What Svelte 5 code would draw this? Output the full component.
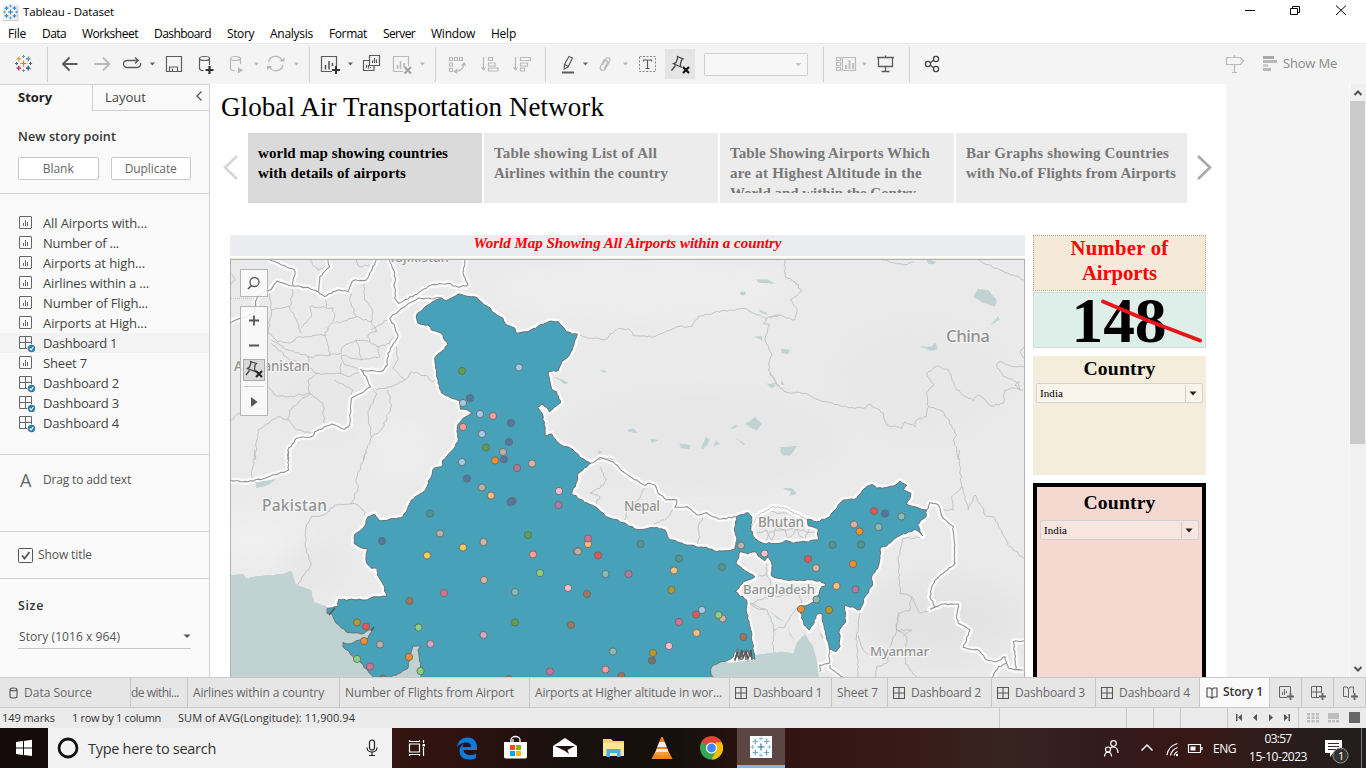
<script>
  // Spreads a label's letters so that it takes the given width.
  function fit(node, width) {
    const n = node.textContent.trim().length;
    const natural = node.getBoundingClientRect().width;
    node.style.letterSpacing = ((width - natural) / n).toFixed(3) + 'px';
  }

  let seed = 7;
  const rnd = () => ((seed = (seed * 16807) % 2147483647) / 2147483647) - 0.5;

  const parse = (text, ox = 0, oy = 0, k = 1) =>
    text.trim().split(/\s+/).map((p) => {
      const [x, y] = p.split(',').map(Number);
      return [ox + x / k, oy + y / k];
    });

  // Turns a coarse polyline into a coastline-like one.
  function rough(pts, amp = 1.6, close = false) {
    const all = close ? [...pts, pts[0]] : pts;
    let d = `M${all[0][0].toFixed(1)} ${all[0][1].toFixed(1)}`;
    for (let i = 1; i < all.length; i++) {
      const [x0, y0] = all[i - 1], [x1, y1] = all[i];
      const len = Math.hypot(x1 - x0, y1 - y0) || 1;
      const steps = Math.max(1, Math.round(len / 2.6));
      for (let s = 1; s <= steps; s++) {
        const t = s / steps;
        const o = s === steps ? 0 : rnd() * amp;
        d += `L${(x0 + (x1 - x0) * t - ((y1 - y0) / len) * o).toFixed(1)} ${(y0 + (y1 - y0) * t + ((x1 - x0) / len) * o).toFixed(1)}`;
      }
    }
    return d + (close ? 'Z' : '');
  }

  const india = rough(parse(`416.3,316 419.7,311.7 428,305 432,302 441.3,297.7 446.3,300.7 458,294 466,296 474.7,296.7 488,306.7 494.7,313.3 503,318.3 506.7,325 515,328.3 516.7,333.3 528,331.7 540,325 548.3,321.7 558.3,321.7 565,330 571.7,334 577.3,334 574,345 568.3,356.7 561.7,361.7 558.3,370.7 548.3,371.7 550,381.7 551.7,389.3 556.7,391.7 560.7,402.7 555,406.7 549.3,411.7 543.3,404 537.3,406.7 543.3,416.7 545,430 545,436 551.7,434 560,444 573.3,450 574,451.7 581.7,458.3 590.7,463.3 578.3,473.3 576.7,481.7 571.7,493.3 580,499.3 595,506.7 606.7,516.7 623.3,522.7 636.7,529.3 656.7,527.3 665,530 668.3,538.3 686.7,545 706.7,547.3 716.7,551.7 735,549.3 737,540 734.3,530 736.7,516.7 748.3,512.7 751.7,516.7 750.7,530 755,538.3 763.3,543.3 780,543.3 785,540.7 793.3,543.3 818.3,540 817.3,528.3 808.3,526 807.3,519.3 816.7,521.7 830,516.7 835,510 843.3,500 856.7,498.3 865,488.3 871.7,484.3 876.7,488.3 893.3,486 900,481 906.7,485 903.3,490 911,493.3 910,498.3 906,504 916.7,507.3 926.7,510 926,516.7 917.3,525 922.7,536 915,529.3 896.7,537.3 886.7,546 880.7,547.3 880,558.3 878.3,566.7 871.7,576.7 872.7,585 865,596.7 860,610 845,605 845,623.3 839.3,630 840,646.7 836,651.7 829.3,649.3 826.7,636.7 823.3,623.3 821.7,613.3 817.3,614 812.7,625 809.3,630 804,625 800.7,613.3 800,606.7 810,604 817.3,598.3 821.7,586.7 825.7,585 820,580.7 800,580 786.7,580 771.7,576 771.7,563.3 768.3,556.7 765,560.7 758,556 755,551.7 748,554 740,551.7 736,563.3 745,570.7 755,576.7 743.3,581.7 735,591.7 746.7,600 746.7,613.3 750,626.7 752.7,643.3 755,659.3 750,656 748,650 746,660 744,651 741,660 739,652 735,660.7 738,648.3 731.7,658.3 718.3,663.3 711.7,666.7 710.7,671.7 714,682 421.3,682 420.7,663.3 418,650 420.7,646 413,646 410.7,656.7 408,668.3 391,677 385,682 378,682 373,677 361.3,663.3 343,646.7 343,642.3 348,644 361.3,640 368,638.3 373.7,628.3 361.3,634 348,632.7 336.3,623.3 330.7,613.3 327,613.3 327.3,608.3 338,606.7 338.7,599.3 364.7,600 376.3,596.7 386.3,596.7 384.7,588.3 377.3,575 377.3,568.3 371.3,568.3 366.3,561.7 367.3,548.3 361.3,547.7 354,543.3 354.7,535 364.7,526 368,516.7 374.7,514.3 379.7,521 403,516.7 411.3,500 424.7,490.7 431.3,476.7 433,469.3 443,465 443,460 450.7,451.7 458,441.7 457.3,426.7 463,418.3 473,413.3 467.3,410 460.7,409.3 460.7,401.7 441.3,392.7 438,383.3 434.7,358.3 441.3,351.7 448,345 441.3,333.3 431.3,330 428,325 418,323.3`), 1.5, true);

  const tiles = { a: [228, 230], b: [500, 230], c: [770, 230], d: [228, 450], e: [500, 450], f: [730, 450] };
  const line = (amp) => ([t, p]) => rough(parse(p, ...tiles[t], 3), amp);
  const shape = ([t, p]) => rough(parse(p, ...tiles[t], 3), 0.8, true);

  const major = [
    ['a', '8,278 40,265 80,250 82,215 90,195 130,178 148,153 195,168 240,172 270,185 290,200 330,180 360,185 375,152 415,150 425,130 445,90'],
    ['a', '125,90 160,105 200,120 195,168'],
    ['a', '300,90 305,110 275,140 272,185'],
    ['a', '485,90 500,130 500,205 512,220 560,195 610,165 660,160 690,172 720,165 705,130 710,90'],
    ['a', '640,205 570,205 520,235 485,265 500,290 510,320 480,370 478,405 460,425 400,420 415,440 428,470 400,490 370,505 365,585 350,598 310,582 260,605 255,618 205,625 180,660 180,690'],
    ['d', '180,0 182,60 105,87 45,95 8,90'],
    ['e', '272,40 300,22 340,35 370,65 430,105 450,100 465,105 475,130 500,150 530,150 525,172 560,170 590,195 620,188 655,207 710,200'],
    ['f', '590,180 600,158 625,165 640,205 670,230 675,340 615,390 605,410 600,440 615,470 600,478 640,462 685,462 680,495 685,520 720,540 700,592 745,600 770,630 800,635 825,620 835,655 880,660'],
    ['f', '858,658 850,575 883,572'],
    ['f', '830,640 805,650 785,682'],
    ['f', '298,600 298,640 270,645 270,665'],
    ['f', '300,645 300,655 340,682']
  ].map(line(1.5));

  const mid = [
    ['f', '65,230 80,200 95,188 130,170 165,175 200,192 232,208'],
    ['b', '290,690 310,683 345,690'],
  ].map(line(1.5));

  const minor = [
    ['a', '125,190 130,240 150,235 185,230 195,170'],
    ['a', '130,240 120,310 150,335 185,340 215,320 295,315'],
    ['a', '185,230 205,270 220,310'],
    ['a', '220,295 250,260 245,230 315,235 320,260 290,315 300,345 305,375'],
    ['a', '290,200 295,230'],
    ['a', '375,155 365,210 385,260 430,275 435,245 410,210 410,160'],
    ['a', '320,280 385,260'],
    ['a', '430,275 445,305 420,315 425,335 450,350 485,340 500,320'],
    ['a', '430,300 485,265'],
    ['a', '305,375 340,370 345,350 385,330 425,335'],
    ['a', '385,330 400,390 340,375 350,405 400,420'],
    ['a', '400,390 455,380 450,350'],
    ['a', '305,375 240,380 245,415 270,430 335,430 340,400'],
    ['a', '335,430 360,440 405,425'],
    ['a', '130,340 175,380 210,400 245,415'],
    ['a', '130,330 180,360 240,380'],
    ['a', '270,430 240,450 245,490 285,520 290,580'],
    ['a', '320,450 375,480 370,505'],
    ['a', '245,490 180,500 140,495 122,470'],
    ['a', '245,490 185,540 180,565 205,600 260,610'],
    ['a', '8,570 60,530 122,540'],
    ['a', '80,690 90,600 150,560 180,570'],
    ['a', '430,470 445,490 420,550 430,620 405,690'],
    ['a', '445,480 500,465 530,450 550,425 600,440 615,455 630,430'],
    ['a', '505,350 510,390 495,415 510,430 530,450'],
    ['a', '480,480 490,530 460,600 430,620'],
    ['a', '8,130 22,148 8,165'],
    ['a', '245,90 270,120 290,110'],
    ['a', '385,90 395,110 425,105'],
    ['d', '80,0 72,85'],
    ['d', '413,0 405,35 385,85 390,115 368,165'],
    ['d', '205,408 250,345 232,290 235,225 250,200 290,195 320,165 370,160 395,170 420,205'],
    ['b', '235,318 315,328 355,295 390,300 400,318 465,320 530,290 575,290 595,260 665,242 730,235 800,265 840,255'],
    ['b', '800,265 790,280 810,285 795,330 815,370 805,420 835,470'],
    ['c', '20,90 45,90 45,140 75,155 95,185 60,210 80,235 75,270 20,255 0,265'],
    ['c', '0,430 30,475 55,488 105,490 150,512 230,530 280,535 300,522 340,550 350,585 395,595 405,575 435,590 440,570 470,560 475,530'],
    ['c', '475,530 468,490 492,465 470,432 500,408 535,420 560,480 610,512 625,495 665,528 700,520 705,480 735,475 760,480'],
    ['c', '475,530 520,545 560,615 550,630 568,690'],
    ['c', '335,90 400,105 430,95'],
    ['c', '625,90 690,120 730,135 765,150'],
    ['c', '765,410 730,410 690,395 680,405 700,440 740,455 750,480 735,465 750,455'],
    ['c', '765,345 750,365 765,385'],
    ['f', '687,0 695,110 715,180 735,135 770,200 790,200 840,290 885,330'],
    ['f', '695,110 665,140 670,180 640,180'],
    ['f', '575,262 520,265 505,320 510,430 545,440 570,490 610,480'],
    ['f', '545,440 540,480 505,490 500,540 530,560 525,640 560,682'],
    ['f', '505,490 500,540 480,590 470,640 440,650 435,682'],
    ['f', '500,540 545,540 520,560'],
    ['f', '390,480 380,560 385,682'],
    ['f', '385,555 400,600 415,615'],
    ['e', '300,50 320,90 300,115 270,130 300,140 285,165'],
    ['e', '435,110 420,145 380,185 372,218'],
    ['e', '525,170 500,205 450,230'],
    ['e', '612,195 595,230 600,260 590,290'],
    ['f', '90,235 100,200 120,185 150,190 180,190'],
    ['f', '80,250 110,240 125,270 140,230 165,240 175,265 200,240 220,270 240,235'],
    ['f', '105,275 120,245 190,235 260,250'],
    ['f', '112,320 108,370 120,390 120,440 60,460 110,480 130,530 130,610'],
    ['f', '110,375 75,380'],
    ['f', '130,540 165,530 180,500 215,460 205,430 120,440'],
    ['f', '60,460 80,475 105,480']
  ].map(line(2));

  const sea = [
    ['d', '8,375 45,372 55,385 85,378 165,372 190,362 205,405 250,420 258,455 297,470 330,500 440,540 600,580 600,692 8,692'],
    ['f', '-110,692 -110,600 0,640 75,628 75,615 110,610 150,605 190,610 200,580 215,560 225,552 250,590 262,640 268,692']
  ].map(shape);

  const lakes = [
    ['b', '768,148 800,148 825,160 775,158'], ['b', '720,185 738,185 736,195 722,195'], ['b', '778,238 800,248 803,254 780,246'],
    ['b', '762,320 785,318 788,332'], ['b', '300,418 320,422 312,430'], ['b', '165,442 185,448 205,458 192,463 180,450'],
    ['b', '382,600 400,595 415,610 385,605'], ['b', '450,628 475,630 455,638'], ['b', '538,640 572,645 568,658 542,655'],
    ['b', '602,655 618,620 630,630 610,658'], ['b', '640,650 648,632 660,642'], ['b', '690,595 712,584 705,596'],
    ['b', '736,582 765,562 785,582 768,602'], ['b', '705,622 738,642 730,645'], ['b', '797,460 830,465 815,476'], ['b', '293,660 308,665 296,672'],
    ['c', '470,90 498,93 492,103 475,101'], ['c', '610,200 622,178 655,180 680,210 675,230 640,218'], ['c', '660,285 685,257 690,270'],
    ['c', '450,350 485,350 495,338 503,358 482,362'], ['c', '32,358 60,358 55,372 35,370'], ['c', '30,652 80,648 72,662 40,678'],
    ['c', '0,462 15,460 8,475'], ['c', '0,152 14,160 0,163'], ['c', '34,448 44,465 32,462'],
    ['f', '150,0 195,0 178,18 155,12'], ['f', '158,115 185,115 200,130 178,138 182,124'], ['f', '118,483 165,515 140,505'],
    ['f', '168,510 178,545 195,572 182,560'], ['f', '268,540 280,560 276,570'], ['d', '82,97 145,87 125,103 85,115']
  ].map(shape);

  const C = { B: '#4e79a7', b: '#a0cbe8', O: '#f28e2b', o: '#ffbe7d', G: '#59a14f', g: '#8cd17d', Y: '#b6992d', y: '#f1ce63', T: '#499894', t: '#86bcb6', R: '#e15759', r: '#ff9d9a', D: '#79706e', a: '#bab0ac', P: '#d37295', p: '#fabfd2', V: '#b07aa1', v: '#d4a6c8', N: '#9d7660', n: '#d7b5a6' };
  const airports = `G462,371 B470,398 b463,403 b480,414 r493,416 r463,427 b482,434 G486,447.5 a503,452 b519,367.5 B511,423 B509,442 b462,462 B504,459.5 O495,460.5 B467,478.5 a482,487.5 o491,495.5 T430,513.5 a440,533.5 B382,541 y463,547.5 n483.5,542 y427,555.5 n484,580 P444,593 N409.5,601 Y357,622.5 R366,626.5 O364,641 a380,644.5 g418.5,627.5 v430.5,644 v483.5,635 O409,657 g357,659 P370,666.5 g420.5,671 N383,678.5 V517,468 n532,463.5 p559,491 V558.5,505 B512.5,501 B510.5,502 G528,535 o588,544 P588,538.5 n577,551 a578,551.5 R598,555.5 r533,554.5 T640.5,544 T679,558.5 T722,567 o674,570.5 g540,573 t605.5,574 V628.5,574 p568,588 t515,592 N587,594 Y671.5,590 R696,614.5 b702,610 n722.5,618.5 g718.5,615 G515,622.5 N571,625 P679,622 o696.5,633 N743.5,637 p669,646 t613,651.5 Y653,653 D652,660.5 r605.5,669.5 P550,671.5 N621.5,676 N509,679 a741,545.5 p764.5,553.5 R874,511 B885,513.5 t901.5,516.5 t878.5,527 n854,524.5 O859.5,531.5 T832.5,545 T861,544.5 R808,559 n816,568 O853,564 o836.5,586 V855.5,589.5 t816.5,599.5 O801,609 Y829,610`
    .split(/\s+/).map((s) => ({ c: C[s[0]], p: s.slice(1).split(',') }));

  // Icons are drawn in window coordinates; the box is x y width height.
  const svg = (box, body) => {
    const [, , w, h] = box.split(' ');
    return `<svg xmlns="http://www.w3.org/2000/svg" width="${w}" height="${h}" viewBox="${box}" fill="none" style="display:block">${body}</svg>`;
  };
  const plus = (x, y, r, c, w = 1.2) => `<path d="M${x - r} ${y}h${2 * r}M${x} ${y - r}v${2 * r}" stroke="${c}" stroke-width="${w}"/>`;
  const burst = (x, y, s, c) =>
    plus(x, y, 3 * s, c[0]) + plus(x - 4.7 * s, y - 4.6 * s, 2.3 * s, c[1]) + plus(x + 4.7 * s, y - 4.6 * s, 2.3 * s, c[2]) +
    plus(x - 4.7 * s, y + 4.6 * s, 2.3 * s, c[3]) + plus(x + 4.7 * s, y + 4.6 * s, 2.3 * s, c[4]) +
    plus(x, y - 7 * s, 1.6 * s, c[5], 1) + plus(x, y + 7 * s, 1.6 * s, c[5], 1) + plus(x - 7 * s, y, 1.6 * s, c[6], 1) + plus(x + 7 * s, y, 1.6 * s, c[6], 1);
  const dk = '#5c5c5c', lt = '#b9b9b9';
  const caret = (x, c = '#666') => [x - 4, 8, svg(`${x - 4} 60 8 8`, `<path d="M${x - 2.2} 62.5h5.2l-2.600 3z" fill="${c}"/>`)];
  const ic = (x, w, b) => [x, w, svg(`${x} 52 ${w} 24`, b)];
  const sep = (x) => [x, 1, `<i style="display:block;width:1px;height:35px;background:#cfcfcf"></i>`];

  const tools = [
    ic(14, 20, burst(23.5, 63.5, 1, ['#e8762c', '#eb912c', '#5b879b', '#c72037', '#1f447e', '#7199a6', '#5c6692'])),
    sep(47),
    ic(60, 20, `<path d="M77.500 64H63.500M69.500 57.500L63 64l6.500 6.500" stroke="${dk}" stroke-width="1.9"/>`),
    ic(92, 20, `<path d="M94.500 64h14M103 57.500l6.500 6.500-6.500 6.500" stroke="${lt}" stroke-width="1.9"/>`),
    ic(122, 20, `<path d="M138 60.500H127a3.500 3.500 0 0 0 0 7h10.500a3.500 3.500 0 0 0 3-4.500M135 57.500l3.200 3-3.200 3" stroke="${dk}" stroke-width="1.400"/>`),
    caret(152),
    ic(164, 20, `<path d="M166.500 56.500h15v15h-15zM169.500 71.500v-4.500h8v4.500M172.500 71v-2.500" stroke="${dk}" stroke-width="1.200"/>`),
    ic(196, 20, `<path d="M199.500 58v10.500c0 1.200 1.500 2 4 2.200M209.500 58v7M199.500 58.500a5 2 0 0 1 10 0a5 2 0 0 1-10 0" stroke="${dk}" stroke-width="1.200"/><path d="M209.500 66v8m-4-4h8" stroke="#333" stroke-width="2.200"/>`),
    ic(226, 20, `<path d="M230.500 58v10.500c0 1.200 1.500 2 4 2.200M240.500 58v6M230.500 58.500a5 2 0 0 1 10 0a5 2 0 0 1-10 0" stroke="${lt}" stroke-width="1.200"/><path d="M238 67l5 3.300-5 3.200z" fill="${lt}"/>`),
    caret(256, lt),
    ic(266, 20, `<path d="M268.500 62a7.200 7.200 0 0 1 13.500-1.500M283 65a7.200 7.200 0 0 1-13.500 1.800" stroke="${lt}" stroke-width="1.300"/><path d="M279 61.500h5.500v-4zM272.500 66H267v4z" fill="${lt}"/>`),
    caret(296, lt),
    sep(309),
    ic(320, 20, `<path d="M332 71.500h-10.500v-15h15V66" stroke="${dk}" stroke-width="1.200"/><path d="M325.500 65v4.500M329 61v8.500M332.500 63v3" stroke="${dk}" stroke-width="1.600"/><path d="M336 66v8m-4-4h8" stroke="#333" stroke-width="2"/>`),
    caret(350),
    ic(362, 20, `<path d="M369.500 55.500h10v10h-10zM369 60.500h-5.500v10h10.500V66M372.500 63v-2.500M374.500 63v-5M376.500 63v-3.500M366.500 68v-3M368.500 68.500v-3.500M370.500 68v-1" stroke="${dk}" stroke-width="1.200"/>`),
    ic(392, 20, `<path d="M403 71.500h-9.500v-15h15V66" stroke="${lt}" stroke-width="1.200"/><path d="M397.500 65v4M400.500 61v8M404 63v4" stroke="${lt}" stroke-width="1.600"/><path d="M404.500 67l6.500 6.500m0-6.500l-6.500 6.500" stroke="#a5a5a5" stroke-width="2.200"/>`),
    caret(422, lt),
    sep(435),
    ic(447, 20, `<path d="M449.500 57.500h3v3h-3zM454.500 57.500h3v3h-3zM459.500 57.500h3v3h-3zM449.500 63h3v3h-3zM449.500 68.500h3v3h-3zM464 64c0 4-3.500 7.500-9 7.500M461.500 66l2.500-3 2 3M457.500 69l-3 2.500 3 2" stroke="${lt}" stroke-width="1.200"/>`),
    ic(480, 20, `<path d="M483.500 57v13M481.500 67l2 3 2-3M488.500 57.500h4v3h-4zM488.500 63h6.500v3h-6.500zM488.500 68h9.500v3h-9.500z" stroke="${lt}" stroke-width="1.200"/>`),
    ic(512, 20, `<path d="M515.500 57v13M513.500 67l2 3 2-3M520.500 57.500h10v3h-10zM520.500 63h7v3h-7zM520.500 68h4v3h-4z" stroke="${lt}" stroke-width="1.200"/>`),
    sep(545),
    ic(557, 20, `<path d="M569 56.500l3.500 1.500-4.500 9-3.800 2 .3-4.500z M565 64.500l3 2" stroke="${dk}" stroke-width="1.200"/><path d="M562 72.500h12" stroke="${dk}" stroke-width="2"/>`),
    caret(585),
    ic(595, 20, `<path d="M602.500 65l3.300-6.200c1.500-2.500 5.300-.8 4 2l-4.500 8.200c-1.800 3-6.200.8-4.800-2.200l4-7.500M604 69l3.500-6.500c.8-1.600-1-2.500-2-1" stroke="${lt}" stroke-width="1.200"/>`),
    caret(625, lt),
    ic(637, 20, `<path d="M639.500 56.500h16v15h-16z" stroke="#888" stroke-dasharray="2 1.500"/><path d="M643.500 61.500v-1.500h8v1.500M647.500 60v8.500M645.500 68.500h4" stroke="${dk}" stroke-width="1.200"/>`),
    [665, 30, `<span style="display:block;background:#e5e5e5;padding:3px 0">` + svg('665 52 30 24', `<path d="M677.500 56.500l5.500 2.500-1.500 1.200-1.200 4 .7 2.800-7.500-3.200 2.500-1.300 1.500-4zM675.500 65.500l-4 5" stroke="#444" stroke-width="1.300"/><path d="M683 67l6 6m0-6l-6 6" stroke="#111" stroke-width="2.200"/>`) + `</span>`],
    [704, 104, svg('704 51 104 24', `<rect x="704.500" y="52.500" width="103" height="22" rx="1" fill="#f7f7f7" stroke="#cfcfcf"/><path d="M795.500 62h6l-3 3.500z" fill="#c8c8c8"/>`)],
    sep(823),
    ic(834, 24, `<path d="M836.500 57.500h4v3h-4zM836.500 62.500h4v3h-4zM836.500 67.500h4v3h-4zM842.500 57.500h13v13h-13z" stroke="${lt}" stroke-width="1.200"/><path d="M846 65v4M849.500 60v9M853 63v6" stroke="${lt}" stroke-width="1.800"/>`),
    caret(863.5, lt),
    ic(875, 20, `<path d="M877 57.500h17M878.500 58v8.500h14V58M885.500 67v4M881.500 71.500h8M885.500 57v-1.500" stroke="${dk}" stroke-width="1.300"/>`),
    sep(909),
    ic(922, 20, `<circle cx="928" cy="64" r="2.600" stroke="#444" stroke-width="1.300"/><circle cx="936" cy="59" r="2.600" stroke="#444" stroke-width="1.300"/><circle cx="936" cy="69" r="2.600" stroke="#444" stroke-width="1.300"/><path d="M930.500 62.500l3-2M930.500 65.500l3 2" stroke="#444" stroke-width="1.300"/>`),
    ic(1225, 20, `<path d="M1226.500 57.500h14l3 3.500-3 3.500h-14zM1234.500 55v2.500M1234.500 65v7.500M1232 72.500h5" stroke="${lt}" stroke-width="1.200"/>`),
    ic(1262, 16, `<path d="M1263 56h11v3h-11z" fill="#aaa"/><path d="M1263 60h14v3h-14z" fill="#b9b9b9"/><path d="M1263 64h5v3h-5z" fill="#ccc"/><path d="M1263 68h8v3h-8z" fill="#b9b9b9"/>`)
  ];
  const placed = tools.map(([x, w, html], i) => ({ gap: x - (i ? tools[i - 1][0] + tools[i - 1][1] : 0), w, html }));

  const sheetIcon = svg('0 0 16 16', `<rect x="1.500" y=".5" width="12" height="12" rx=".5" stroke="#666"/><path d="M5.500 10V7M7.500 10V4M9.500 10V6" stroke="#666"/>`);
  const dashIcon = svg('0 0 18 17', `<path d="M1.500 .5h12v12h-12zM7.500 .5v12M1.500 6.500h12" stroke="#666"/><circle cx="13.500" cy="12.500" r="4.300" fill="#fafafa"/><circle cx="13.500" cy="12.500" r="3.700" fill="#2f7ea6"/><path d="M11.700 12.500l1.400 1.400 2.300-2.700" stroke="#fff" stroke-width="1.100"/>`);
  const grid = svg('0 0 12 12', `<path d="M.5 .5h11v11H.5zM6 .5v11M.5 6h11" stroke="#555" stroke-width="1.100"/>`);
  const book = (c) => svg('0 0 12 14', `<path d="M6 3.500L4.500 2 1 2v9h3.500L6 12.500 7.500 11H11V2H7.500zM6 3.500v9" stroke="${c}" stroke-width="1.200"/>`);
  const addIcons = [
    svg('0 0 20 18', `<path d="M11 13.500H3.500v-11h11V9M6.500 11V8M8.500 11V5M10.500 9V7" stroke="#666"/><path d="M14.500 9v7M11 12.500h7" stroke="#666" stroke-width="1.800"/>`),
    svg('0 0 20 18', `<path d="M11 13.500H3.500v-11h10V9M8.500 2.500v11M3.500 8h10" stroke="#666"/><path d="M14.500 9v7M11 12.500h7" stroke="#666" stroke-width="1.800"/>`),
    svg('0 0 20 18', `<path d="M8.500 5L7 3H3.500v9.500H7l1.500 1.500M8.500 5L10 3h3.500v6M8.500 5v9" stroke="#666"/><path d="M14.500 9v7M11 12.500h7" stroke="#666" stroke-width="1.800"/>`)
  ];

  const menus = [['File', 8, 18], ['Data', 42, 24], ['Worksheet', 82, 56], ['Dashboard', 154, 57], ['Story', 227, 27], ['Analysis', 270, 43], ['Format', 329, 38], ['Server', 383, 32], ['Window', 431, 44], ['Help', 491, 25]]
    .map((m, i, a) => ({ t: m[0], w: m[2], gap: m[1] - (i ? a[i - 1][1] + a[i - 1][2] : 0) }));

  const sheets = [['All Airports with...', 104], ['Number of ...', 76], ['Airports at high...', 102], ['Airlines within a ...', 106], ['Number of Fligh...', 105], ['Airports at High...', 104], ['Dashboard 1', 74], ['Sheet 7', 44], ['Dashboard 2', 76], ['Dashboard 3', 76], ['Dashboard 4', 76]];

  const cards = [
    [['world map showing countries', 190], ['with details of airports', 148]],
    [['Table showing List of All', 163], ['Airlines within the country', 174]],
    [['Table Showing Airports Which', 200], ['are at Highest Altitude in the', 192], ['World and within the Contry', 186]],
    [['Bar Graphs showing Countries', 203], ['with No.of Flights from Airports', 210]]
  ];

  const pages = [
    ['', 'Airlines within a country', 131, 152], ['', 'Number of Flights from Airport', 169, 190], ['', 'Airports at Higher altitude in wor...', 187, 200],
    ['g', 'Dashboard 1', 69, 102], ['', 'Sheet 7', 41, 56], ['g', 'Dashboard 2', 70, 104], ['g', 'Dashboard 3', 70, 104], ['g', 'Dashboard 4', 71, 104]
  ];

  const T = (x, w, b) => ({ x, w, html: svg(`${x} 732 ${w} 32`, b) });
  const apps = [
    T(404, 24, `<path d="M409.500 744v8h10v-8zM409.500 740v1.500h10V740M409.500 756v-1.500h10v1.500" stroke="#fff" stroke-width="1.200"/><path d="M423.500 740v3M423.500 747v9" stroke="#fff" stroke-width="1.200"/><path d="M422.500 744h2.500v2.500h-2.500z" fill="#fff"/>`),
    T(455, 24, `<path d="M457 747c1-6 5-9.500 10.500-9.500 6 0 9.500 4 9.500 10v2.500h-13.500c.3 3.500 3 5 6.500 5 2.500 0 4.500-.7 6-1.600v4.500c-1.800 1-4.200 1.600-7 1.600-6 0-9.500-3.500-9.500-8.500 0-3.500 1.800-6 4.500-7.500-1 1.300-1.300 2.500-1.400 3.500h8.400c0-2.600-1.500-4.400-4.500-4.400-4 0-7.500 2-9.500 4.400z" fill="#0c7bdc"/>`),
    T(503, 24, `<path d="M511 742v-2a4.500 3.500 0 0 1 9 0v2M513 742v-3" stroke="#fff" stroke-width="1.300"/><path d="M504 742h23v15.500l-1.500 1h-20l-1.500-1z" fill="#fff"/><path d="M510 745h5v5h-5z" fill="#f25022"/><path d="M516 745h5v5h-5z" fill="#7fba00"/><path d="M510 751h5v5h-5z" fill="#00a4ef"/><path d="M516 751h5v5h-5z" fill="#ffb900"/>`),
    T(553, 24, `<path d="M553 746l12-8 12 8v11h-24z" fill="#fff"/><path d="M555 746h20l-7.500 4 1.500 4-4-3z" fill="#22100e"/>`),
    T(602, 24, `<path d="M603 739h8l2 2h11v15h-21z" fill="#f7d36b"/><path d="M603 743h21v13h-21z" fill="#ffe694"/><path d="M606.500 757v-8h14v8h-3.500v-4h-7v4z" fill="#3fb4e6"/>`),
    T(651, 24, `<path d="M661.200 737h1.600l6.700 17h-15z" fill="#f57f17"/><path d="M659.300 742h5.400l2 5h-9.400z" fill="#eee"/><path d="M656.700 749h10.600l1.700 4.500h-14z" fill="#f4e9df"/><path d="M654.500 753h15l3 6h-21z" fill="#f08a1d"/><path d="M655 754c3 2 11 2 14 0l-1-2h-12z" fill="#ff9a2e"/>`),
    T(699, 24, `<circle cx="711.500" cy="748" r="11.500" fill="#34a853"/><path d="M701.500 742.200a11.500 11.500 0 0 1 20 0L711.500 748z" fill="#ea4335"/><path d="M701.500 742.200a11.500 11.500 0 0 1 20-.2h-10z" fill="#ea4335"/><path d="M721.500 742.200a11.500 11.500 0 0 1-10 17.300l5-9-1-8.300z" fill="#fbbc05"/><circle cx="711.500" cy="748" r="5.600" fill="#fff"/><circle cx="711.500" cy="748" r="4.400" fill="#4285f4"/>`)
  ].map((a, i, l) => ({ ...a, gap: a.x - (i ? l[i - 1].x + 24 : 392) }));

  const blue = ['#2b7bb5', '#3a85bb', '#3a85bb', '#3a85bb', '#3a85bb', '#5c9ec9', '#5c9ec9'];
  const pale = ['#2b7bb5', '#6fa9d0', '#6fa9d0', '#6fa9d0', '#6fa9d0', '#8fbbd9', '#8fbbd9'];
  const appLogo = svg('0 0 18 18', `<path d="M1 1h15v17H1z" fill="#f0f3f5"/><path d="M16 2v15.500H1" stroke="#c8c8c8"/>` + burst(8.5, 9, 0.85, blue));
  const bigLogo = svg('0 0 24 24', `<path d="M1 1h22v22H1z" fill="#fff"/>` + burst(12, 12, 1.2, pale));
</script>

{#snippet combo(tint)}
  <div class="combo" class:tint>
    <span use:fit={23}>India</span>
    <svg width="17" height="17" viewBox="0 0 17 17"><path d="M.5 0v17" stroke="#ccc" /><path d="M4.500 6.500h7l-3.500 4z" fill="#222" /></svg>
  </div>
{/snippet}

<div class="window">
  <header class="titlebar">
    {@html appLogo}
    <span class="name" use:fit={91}>Tableau - Dataset</span>
    <svg class="winbtns" width="120" height="20" viewBox="1240 0 120 20" fill="none" stroke="#000">
      <path d="M1245 10.500h10M1290.500 8.500h7v6h-7zM1292.500 8V6.500h7v6H1298" /><path d="M1336 5.500l10 9.500M1346 5.500l-10 9.500" />
    </svg>
  </header>
  <nav class="menubar">
    {#each menus as m}<span style:margin-left="{m.gap}px" style:width="{m.w}px"><b use:fit={m.w}>{m.t}</b></span>{/each}
  </nav>
  <div class="toolbar">
    {#each placed as p}<span style:margin-left="{p.gap}px" style:width="{p.w}px">{@html p.html}</span>{/each}
    <span class="showme"><b use:fit={54}>Show Me</b></span>
  </div>

  <main>
    <aside>
      <div class="tabs">
        <div class="on"><b use:fit={34}>Story</b></div>
        <div class="off"><span use:fit={41}>Layout</span><svg width="8" height="12" viewBox="0 0 8 12" fill="none" stroke="#555" stroke-width="1.300"><path d="M6.500 .5L2 5l4.500 4.500" /></svg></div>
      </div>
      <section class="new">
        <h4><span use:fit={98}>New story point</span></h4>
        <div class="btns"><button><span use:fit={31}>Blank</span></button><button><span use:fit={52}>Duplicate</span></button></div>
      </section>
      <ul>
        {#each sheets as s, i}
          <li class:sel={i === 6}><i>{@html s[0].startsWith('Dash') ? dashIcon : sheetIcon}</i><span use:fit={s[1]}>{s[0]}</span></li>
        {/each}
      </ul>
      <section class="drag"><i>A</i><span use:fit={88}>Drag to add text</span></section>
      <section class="check">
        <svg width="15" height="15" viewBox="0 0 15 15" fill="none"><rect x=".5" y=".5" width="14" height="14" rx="1" stroke="#555" /><path d="M4 7.500l2.500 3 5-6.500" stroke="#555" stroke-width="1.800" /></svg>
        <span use:fit={54}>Show title</span>
      </section>
      <section class="size">
        <h4><span use:fit={26}>Size</span></h4>
        <div class="pick"><span use:fit={101}>Story (1016 x 964)</span><svg width="8" height="5" viewBox="0 0 8 5"><path d="M.5 .5h7L4 4z" fill="#555" /></svg></div>
      </section>
    </aside>

    <div class="story">
      <h1><span use:fit={383}>Global Air Transportation Network</span></h1>
      <div class="points">
        <svg width="38" height="70" viewBox="210 133 38 70" fill="none" stroke="#d5d5d5" stroke-width="2.500"><path d="M237 156l-12 11.500 12 11.500" /></svg>
        <div class="cards">
          {#each cards as c, i}
            <div class="card" class:active={i === 0}><div>{#each c as l}<p><span use:fit={l[1]}>{l[0]}</span></p>{/each}</div></div>
          {/each}
        </div>
        <svg width="39" height="70" viewBox="1187 133 39 70" fill="none" stroke="#aaa" stroke-width="2.700"><path d="M1198 156l12 11.500-12 11.500" /></svg>
      </div>
      <div class="board">
        <div class="left">
          <div class="maptitle"><span use:fit={308}>World Map Showing All Airports within a country</span></div>
          <div class="map">
            <svg class="geo" width="793" height="418" viewBox="231 260 793 418">
              <defs>
                <filter id="soft" x="-50%" y="-50%" width="200%" height="200%"><feGaussianBlur stdDeviation="14" /></filter>
              </defs>
              <rect x="231" y="260" width="793" height="418" fill="#eaeaea" />
              <g filter="url(#soft)">
                <ellipse cx="640" cy="290" rx="150" ry="25" fill="#eeeeee" /><ellipse cx="260" cy="540" rx="50" ry="30" fill="#f0f0f0" />
                <ellipse cx="700" cy="440" rx="140" ry="45" fill="#e7e7e7" /><ellipse cx="310" cy="565" rx="30" ry="20" fill="#e6e6e6" />
                <ellipse cx="920" cy="380" rx="90" ry="60" fill="#e8e8e8" /><ellipse cx="940" cy="620" rx="80" ry="40" fill="#e3e3e3" />
                <ellipse cx="330" cy="400" rx="60" ry="40" fill="#e8e8e8" /><ellipse cx="400" cy="450" rx="30" ry="30" fill="#eeeeee" />
              </g>
              <g fill="none" stroke="#b9b9b9" stroke-width=".8">{#each minor as d}<path {d} />{/each}</g>
              <path d="M231 298.500h28" stroke="#c6c6c6" stroke-dasharray="1 1" />
              <g fill="none" stroke="#fafafa" stroke-width="6" stroke-linejoin="round">
                {#each major as d}<path {d} />{/each}{#each mid as d}<path {d} />{/each}<path d={india} />
              </g>
              <g fill="#c1d2d2">{#each sea as d}<path {d} />{/each}{#each lakes as d}<path {d} />{/each}</g>
              <g fill="none" stroke="#959595" stroke-width="1.100">{#each major as d}<path {d} />{/each}</g>
              <g fill="none" stroke="#b4b4b4" stroke-width=".8">{#each mid as d}<path {d} />{/each}</g>
              <path d={india} fill="#47a1b9" stroke="#6b6f72" />
              <path d="M735 660l2-8 2 7 3-9 1 8 3-7 2 8 3-9 1 10M329 615l6-7M371 631l3-4" fill="none" stroke="#555" stroke-width="1.400" />
              <g class="lbl">
                <text x="234" y="371" font-size="13.500" textLength="76">Afghanistan</text>
                <text x="262" y="511" font-size="15.500" textLength="65">Pakistan</text>
                <text x="946" y="342" font-size="17" textLength="44">China</text>
                <text x="624" y="511" font-size="13.500" textLength="36">Nepal</text>
                <text x="758" y="527" font-size="13.500" textLength="46">Bhutan</text>
                <text x="743" y="594" font-size="13.300" textLength="72">Bangladesh</text>
                <text x="870" y="656" font-size="13.300" textLength="59">Myanmar</text>
                <text x="389" y="261.500" font-size="13" textLength="60">Tajikistan</text>
              </g>
              <g stroke="#6c6660" stroke-opacity=".85">
                {#each airports as a}<circle cx={a.p[0]} cy={a.p[1]} r="3.600" fill={a.c} />{/each}
              </g>
            </svg>
            <div class="controls">
              <svg width="28" height="28" viewBox="240 269 28 28" fill="none"><rect x="240.500" y="269.500" width="27" height="27" fill="#fafafa" fill-opacity=".85" stroke="#b5b5b5" /><circle cx="254.500" cy="282" r="4.500" stroke="#555" stroke-width="1.300" /><path d="M251.500 285.500l-3.500 3.500" stroke="#555" stroke-width="1.600" /></svg>
              <svg width="28" height="110" viewBox="240 306 28 110" fill="none">
                <rect x="240.500" y="306.500" width="27" height="109" fill="#fafafa" fill-opacity=".85" stroke="#b5b5b5" />
                <path d="M249 320.500h10M254 315.500v10M249 345.500h10" stroke="#555" stroke-width="1.800" />
                <rect x="243.500" y="359.500" width="21" height="21" fill="#d9d9d9" stroke="#aaa" />
                <path d="M250.500 361.500l6 2-1.500 1.500-.5 4 1 2.500-8-3 2-1.500 1.300-3.500zM249.500 370.500l-3.500 4.500" stroke="#444" stroke-width="1.300" /><path d="M256 371l6 6m0-6l-6 6" stroke="#222" stroke-width="2" />
                <path d="M244 386.500h20" stroke="#ccc" /><path d="M251 397l6.500 5-6.500 5z" fill="#555" />
              </svg>
            </div>
          </div>
        </div>
        <div class="right">
          <div class="numtitle"><p><span use:fit={98}>Number of</span></p><p><span use:fit={75}>Airports</span></p></div>
          <div class="num"><span use:fit={95}>148</span>
            <svg width="173" height="56" viewBox="1033 292 173 56"><path d="M1103 301.500L1149 321l51 19.500" fill="none" stroke="#e8151b" stroke-width="4" stroke-linecap="round" /></svg>
          </div>
          <div class="country"><h3><span use:fit={72}>Country</span></h3>{@render combo(false)}</div>
          <div class="country pink"><h3><span use:fit={72}>Country</span></h3>{@render combo(true)}</div>
        </div>
      </div>
    </div>
    <div class="gutter"></div>
    <div class="scroll">
      <svg width="16" height="17" viewBox="0 0 16 17" fill="none" stroke="#505050" stroke-width="2"><path d="M4.500 11L8 7.500l3.500 3.500" /></svg>
      <div class="thumb"></div>
      <svg class="down" width="16" height="17" viewBox="0 0 16 17" fill="none" stroke="#505050" stroke-width="2"><path d="M4.500 7L8 10.500 11.500 7" /></svg>
    </div>
  </main>

  <div class="pages">
    <div class="src"><svg width="9" height="12" viewBox="0 0 9 12" fill="none" stroke="#555" stroke-width="1.100"><path d="M1 2.500v7c0 2 7 2 7 0v-7c0-2-7-2-7 0c0 1.600 7 1.600 7 0" /></svg><span use:fit={68}>Data Source</span></div>
    <div class="cut"><span use:fit={48}>de withi...</span></div>
    {#each pages as p}
      <div style:width="{p[3]}px">{#if p[0]}<i>{@html grid}</i>{/if}<span use:fit={p[2]}>{p[1]}</span></div>
    {/each}
    <div class="cur"><i>{@html book('#555')}</i><b use:fit={40}>Story 1</b></div>
    {#each addIcons as a}<div class="add">{@html a}</div>{/each}
  </div>

  <div class="status">
    <span use:fit={53}>149 marks</span><span use:fit={89}>1 row by 1 column</span><span use:fit={177}>SUM of AVG(Longitude): 11,900.94</span>
    <svg width="367" height="20" viewBox="999 708 367 20">
      <path d="M999.500 708v20M1126.500 708v20M1153.500 708v20M1180.500 708v20M1227.500 708v20M1298.500 708v20" stroke="#c9c9c9" />
      <path d="M1236 714h1.500v7h-1.500zM1242 714v7l-4-3.500zM1257 714v7l-4-3.500zM1269 714v7l4-3.500zM1284 714v7l4-3.500zM1288.500 714h1.500v7h-1.500z" fill="#555" />
      <path d="M1307 713h3v2.500h-3zM1311.500 713h3v2.500h-3zM1316 713h3v2.500h-3zM1307 716.500h3v2.500h-3zM1311.500 716.500h3v2.500h-3zM1316 716.500h3v2.500h-3zM1307 720h3v2.500h-3zM1311.500 720h3v2.500h-3zM1316 720h3v2.500h-3zM1328 713h11v6h-11zM1328 720h3v2.500h-3zM1332 720h3v2.500h-3zM1336 720h3v2.500h-3z" fill="#bdbdbd" />
      <path d="M1349 712h11v11h-11z" fill="#666" />
    </svg>
  </div>

  <footer>
    <svg width="48" height="40" viewBox="0 728 48 40" fill="#fff"><path d="M16 742l7-1v6.500h-7zM24 740.900l8-1.100v7.700h-8zM16 748.500h7v6.500l-7-1zM24 748.500h8v7.500l-8-1.100z" /></svg>
    <div class="search">
      <svg width="24" height="24" viewBox="0 0 24 24"><circle cx="12" cy="12" r="9" fill="none" stroke="#111" stroke-width="2.800" /></svg>
      <span use:fit={128}>Type here to search</span>
      <svg width="14" height="18" viewBox="0 0 14 18" fill="none" stroke="#222" stroke-width="1.200"><rect x="4.500" y="1" width="5" height="10" rx="2.500" /><path d="M2 8.500c0 6 10 6 10 0M7 13v3.500M4 16.500h6" /></svg>
    </div>
    {#each apps as a}<span class="app" style:margin-left="{a.gap}px">{@html a.html}</span>{/each}
    <div class="running">{@html bigLogo}</div>
    <svg class="tray" width="110" height="40" viewBox="1098 728 110 40" fill="none" stroke="#fff" stroke-width="1.200">
      <circle cx="1113.500" cy="743.500" r="2.800" /><path d="M1110.500 748c1.500-1.500 5-1.500 6.500 1 .8 1.400 1 2.500 1 4" /><circle cx="1108" cy="749.500" r="2.500" /><path d="M1104.500 756.500c.3-3 1.500-4.300 3.500-4.300s3.300 1.300 3.600 4.300" />
      <path d="M1141.500 750.500l5.500-5.500 5.500 5.500" stroke-width="1.500" />
      <path d="M1167 755c1-6 4.500-10 10.500-11.500M1170.500 755.500c.8-4 3-6.500 7-8M1174 755.500c.5-2 1.500-3.200 3.500-4" /><circle cx="1177" cy="755" r="1.200" fill="#fff" stroke="none" />
      <path d="M1188.500 744.500h12v8h-12zM1202 747v3" /><path d="M1190.500 746.500h5v4h-5z" fill="#fff" stroke="none" />
    </svg>
    <span class="eng"><b use:fit={23}>ENG</b></span>
    <div class="clock"><span use:fit={27}>03:57</span><span use:fit={58}>15-10-2023</span></div>
    <svg class="note" width="44" height="40" viewBox="1322 728 44 40"><path d="M1325 740h17v13h-9l-3 4v-4h-5z" fill="#fff" /><path d="M1328 743.500h11M1328 746.500h11M1328 749.500h8" stroke="#3b2624" /><circle cx="1340.500" cy="755.500" r="7.500" fill="#333" stroke="#999" /><text x="1338" y="760" font-size="11" fill="#fff">1</text><path d="M1361.500 728v40" stroke="#777" /></svg>
  </footer>
</div>

<style>
  :global(body) { margin: 0; overflow: hidden; }
  .window { width: 1366px; height: 768px; display: flex; flex-direction: column; background: #fff; overflow: hidden; font-family: "Open Sans", "Noto Sans", sans-serif; color: #444; white-space: nowrap; }
  svg { display: block; flex: none; }
  span, b { display: inline-block; }
  p, h1, h3, h4, ul { margin: 0; padding: 0; }
  .titlebar { height: 24px; display: flex; align-items: center; padding-left: 2px; box-sizing: border-box; color: #000; font-size: 11.5px; }
  .name { margin-left: 3px; margin-top: -1px; }
  .winbtns { margin-left: auto; margin-right: 6px; align-self: flex-start; }
  .menubar { height: 19px; display: flex; line-height: 19px; font-size: 12px; color: #000; }
  .menubar b { font-weight: 400; }
  .toolbar { height: 41px; background: #f4f4f4; border-top: 1px solid #ececec; box-sizing: border-box; display: flex; align-items: center; }
  .toolbar > span { flex: none; }
  .showme { margin-left: 5px; margin-top: -2px; font-size: 13px; color: #8a8a8a; }
  .showme b { font-weight: 400; }
  main { height: 593px; display: flex; flex: none; }

  aside { width: 210px; box-sizing: border-box; background: #fafafa; border-right: 1px solid #cfcfcf; border-top: 1px solid #cfcfcf; display: flex; flex-direction: column; font-size: 13px; flex: none; }
  .tabs { height: 26px; display: flex; }
  .on { width: 92px; padding-left: 18px; box-sizing: border-box; line-height: 25px; color: #222; font-size: 13px; }
  .on b { font-weight: 700; }
  .off { flex: 1; border-left: 1px solid #cfcfcf; border-bottom: 1px solid #cfcfcf; box-sizing: border-box; padding: 0 6px 2px 12px; display: flex; justify-content: space-between; align-items: center; }
  h4 { font-size: 12.5px; line-height: 18px; font-weight: 600; color: #333; }
  .new { padding: 17px 18px 12px; border-bottom: 1px solid #cfcfcf; height: 53px; display: flex; flex-direction: column; gap: 11px; }
  .btns { display: flex; gap: 12px; }
  button { width: 81px; height: 23px; padding: 0 0 1px; border: 1px solid #c9c9c9; border-radius: 2px; background: #fff; font: 12px "Open Sans", sans-serif; color: #666; }
  ul { padding: 19px 0 21px; list-style: none; border-bottom: 1px solid #cfcfcf; }
  li { height: 20px; line-height: 20px; display: flex; padding-left: 18px; }
  li i { width: 25px; padding-top: 3px; height: 17px; }
  li.sel { background: #f3f3f3; }
  .drag { height: 76px; border-bottom: 1px solid #cfcfcf; display: flex; align-items: flex-start; padding-left: 20px; font-size: 12px; color: #555; line-height: 18px; }
  .drag i { width: 23px; font-style: normal; font-size: 18px; line-height: 50px; color: #666; }
  .drag span { margin-top: 16px; }
  .check { height: 46px; border-bottom: 1px solid #cfcfcf; display: flex; align-items: center; gap: 5px; padding-left: 18px; font-size: 12px; color: #555; }
  .check span { margin-top: -1px; }
  .size { padding: 18px 18px 0; }
  .pick { margin-top: 11px; height: 20px; padding-bottom: 2px; border-bottom: 1px solid #c6c6c6; display: flex; justify-content: space-between; align-items: center; font-size: 12px; color: #555; padding-left: 1px; }

  .story { width: 1016px; background: #fff; font-family: "Liberation Serif", serif; overflow: hidden; flex: none; display: flex; flex-direction: column; }
  h1 { font-weight: 400; font-size: 27px; height: 49px; line-height: 47px; padding-left: 11px; color: #000; flex: none; }
  .points { display: flex; height: 70px; flex: none; }
  .cards { display: grid; grid-template-columns: 234px 234px 234px 231px; gap: 2px; }
  .card { background: #ececec; padding: 10px; color: #787878; font-weight: 700; font-size: 15px; line-height: 20px; box-sizing: border-box; height: 70px; }
  .card > div { height: 50px; overflow: hidden; }
  .card.active { background: #dadada; color: #000; }
  .board { margin: 32px 0 0 20px; display: flex; gap: 8px; flex: none; }
  .maptitle { width: 795px; height: 21px; background: #ebecf0; text-align: center; color: #f00; font: italic 700 15px/17px "Liberation Serif", serif; margin-bottom: 3px; }
  .map { position: relative; border: 1px solid #b0b0b0; border-bottom: 0; box-shadow: 0 -1px #f5e7d3; width: 793px; height: 418px; }
  .controls { position: absolute; left: 9px; top: 9px; display: flex; flex-direction: column; gap: 9px; }
  .lbl text { font-family: "Noto Sans", sans-serif; fill: #929292; stroke: #f4f4f4; stroke-width: 2.5px; paint-order: stroke; font-weight: 500; }
  .right { width: 173px; color: #000; font-weight: 700; text-align: center; }
  .numtitle { height: 56px; box-sizing: border-box; background: #f5e9da; border: 1px dotted #bca98e; color: #f00; font-size: 20.7px; line-height: 25px; }
  .num { position: relative; margin-top: 1px; height: 56px; box-sizing: border-box; border: 1px solid #d3dad8; background: #deeee9; font-size: 63.5px; line-height: 55px; }
  .num > span { margin-right: 1px; }
  .num svg { position: absolute; left: -1px; top: -1px; }
  .country { margin-top: 8px; height: 119px; background: #f5eddb; box-sizing: border-box; padding: 0 3px; }
  .country.pink { height: 220px; background: #f5d9d1; border: 4px solid #000; padding: 3px 3px; }
  h3 { font-size: 19.7px; line-height: 24px; height: 27px; }
  .pink h3 { height: 30px; }
  .combo { height: 20px; box-sizing: border-box; border: 1px solid #d2d2d2; background: #f9f5ec; font-weight: 400; font-size: 11px; display: flex; justify-content: space-between; align-items: center; padding-left: 3px; border-radius: 2px; }
  .combo.tint { background: #f7e5e0; }
  .gutter { width: 123px; background: #f4f4f4; }
  .scroll { width: 17px; background: #f0f0f0; border-left: 1px solid #fff; box-sizing: border-box; display: flex; flex-direction: column; }
  .thumb { height: 343px; width: 15px; background: #cbcbcb; }
  .down { margin-top: auto; }

  .pages { height: 31px; display: flex; background: #e6e6e6; border-top: 1px solid #c9c9c9; border-bottom: 1px solid #c9c9c9; box-sizing: border-box; font-size: 12px; color: #666; flex: none; }
  .pages > div { flex: none; display: flex; align-items: center; border-right: 1px solid #c9c9c9; box-sizing: border-box; padding-left: 5px; overflow: hidden; }
  .pages i { margin-right: 6px; }
  .pages > .src { width: 131px; padding-left: 9px; gap: 6px; }
  .pages > .cut { width: 57px; padding-left: 0; }
  .pages > .cur { width: 70px; background: #fafafa; color: #333; padding-left: 6px; }
  .pages > .cur i { margin-right: 5px; }
  .pages > .cur b { font-weight: 600; margin-top: -2px; }
  .pages > .add { width: 32px; padding-left: 6px; }
  .status { height: 20px; display: flex; align-items: center; background: #ebebeb; font-size: 11px; color: #333; padding-left: 2px; gap: 17px; flex: none; }
  .status span { margin-top: -2px; }
  .status svg { margin-left: auto; }
  footer { height: 40px; display: flex; align-items: center; flex: none; color: #fff; background: linear-gradient(90deg, #150b0c 0, #150b0c 48px, #34150f 392px, #2c120f 470px, #17100d 570px, #15100d 680px, #30140f 770px, #381a17 900px, #362421 1010px, #34191a 1120px, #371815 1200px, #2a1c1c 1290px, #211d1e 1366px); }
  .search { width: 344px; height: 40px; background: #f2f2f2; color: #333; display: flex; align-items: center; font-size: 14.5px; box-sizing: border-box; padding: 0 13px 0 8px; }
  .search span { margin-left: 8px; margin-right: auto; }
  .running { width: 48px; height: 40px; box-sizing: border-box; margin-left: 14px; background: #5c4643; border-bottom: 3px solid #76b9ed; display: flex; justify-content: center; align-items: center; }
  .tray { margin-left: 313px; }
  .eng { margin-left: 5px; font-size: 12px; }
  .eng b { font-weight: 400; }
  .clock { display: flex; flex-direction: column; align-items: center; margin-left: 12px; font-size: 12px; line-height: 18px; width: 60px; }
  .note { margin-left: auto; font-family: "Open Sans", sans-serif; }
</style>
